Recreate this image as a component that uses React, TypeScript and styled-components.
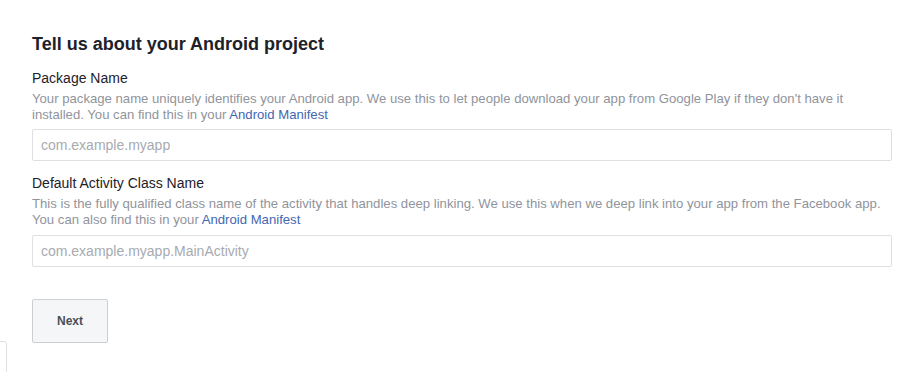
import { FC } from 'react';
import styled, { createGlobalStyle } from 'styled-components';

const GlobalStyle = createGlobalStyle`
  html, body {
    margin: 0;
    padding: 0;
    background: #fff;
  }
  body {
    font-family: 'Liberation Sans', Arial, Helvetica, sans-serif;
    color: #1d2129;
  }
  * {
    box-sizing: border-box;
  }
`;

const Page = styled.div`
  position: relative;
  width: 923px;
  height: 372px;
  overflow: hidden;
`;

const Form = styled.form`
  width: 860px;
  margin-left: 32px;
  padding-top: 33px;
`;

const Title = styled.h2`
  margin: 0 0 14px;
  font-size: 18px;
  line-height: 22px;
  font-weight: 700;
  color: #1d2129;
`;

const Field = styled.div`
  margin-bottom: 13px;
`;

const Label = styled.label`
  display: block;
  font-size: 14px;
  line-height: 18px;
  color: #1d2129;
  margin-bottom: 4px;
`;

const Help = styled.p<{ $gap?: number }>`
  margin: 0 0 ${(p) => p.$gap ?? 6}px;
  font-size: 13.15px;
  line-height: 16px;
  color: #90949c;
  white-space: nowrap;
`;

const Link = styled.a`
  color: #4267b2;
  text-decoration: none;
`;

const Input = styled.input`
  display: block;
  width: 100%;
  height: 32px;
  padding: 0 8px;
  border: 1px solid #dddfe2;
  border-radius: 2px;
  font-family: inherit;
  font-size: 14px;
  color: #1d2129;
  outline: none;
  &::placeholder {
    color: #a7abb1;
  }
`;

const Actions = styled.div`
  margin-top: 32px;
`;

const Button = styled.button`
  width: 76px;
  height: 44px;
  background: #f5f6f7;
  border: 1px solid #ccd0d5;
  border-radius: 2px;
  font-family: inherit;
  font-size: 12px;
  font-weight: 700;
  color: #4b4f56;
  cursor: pointer;
`;

const PeekingPanel = styled.div`
  position: absolute;
  left: -20px;
  top: 341px;
  width: 27px;
  height: 60px;
  border: 1px solid #dddfe2;
  border-radius: 3px;
  background: #fff;
`;

const App: FC = () => {
  return (
    <Page>
      <GlobalStyle />
      <Form onSubmit={(e) => e.preventDefault()}>
        <Title>Tell us about your Android project</Title>
        <Field>
          <Label>Package Name</Label>
          <Help>
            Your package name uniquely identifies your Android app. We use this to let people
            download your app from Google Play if they don't have it
            <br />
            installed. You can find this in your <Link href="#">Android Manifest</Link>
          </Help>
          <Input placeholder="com.example.myapp" />
        </Field>
        <Field>
          <Label>Default Activity Class Name</Label>
          <Help $gap={7}>
            This is the fully qualified class name of the activity that handles deep linking. We
            use this when we deep link into your app from the Facebook app.
            <br />
            You can also find this in your <Link href="#">Android Manifest</Link>
          </Help>
          <Input placeholder="com.example.myapp.MainActivity" />
        </Field>
        <Actions>
          <Button type="submit">Next</Button>
        </Actions>
      </Form>
      <PeekingPanel />
    </Page>
  );
};

export default App;
